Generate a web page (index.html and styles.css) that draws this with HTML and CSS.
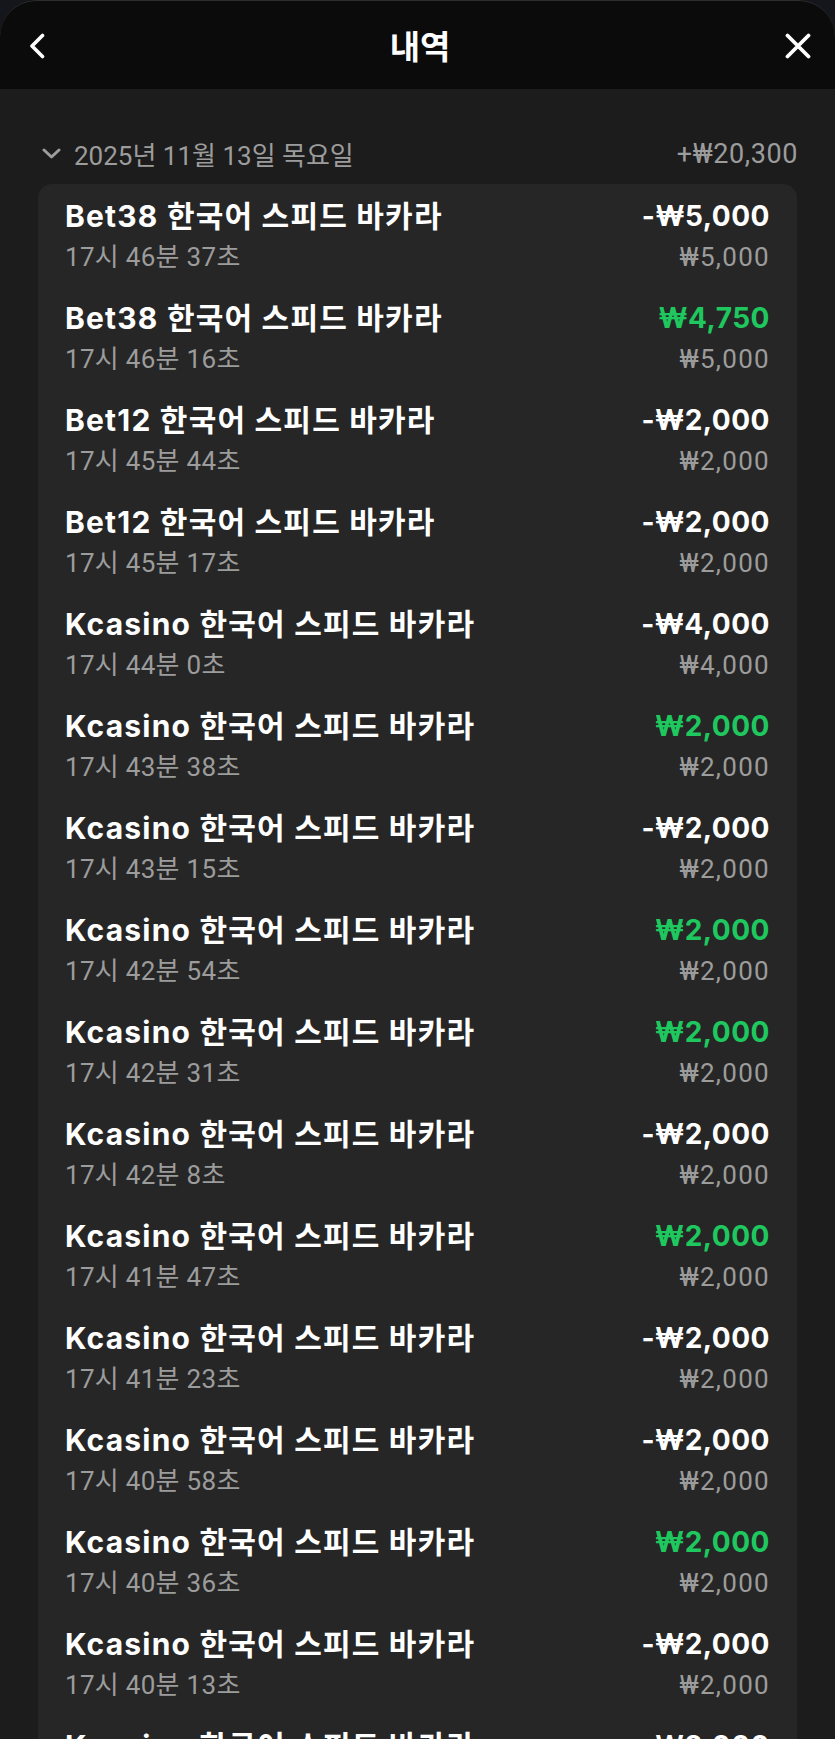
FILE: index.html
```html
<!DOCTYPE html>
<html lang="ko">
<head>
<meta charset="utf-8">
<title>내역</title>
<link rel="stylesheet" href="styles.css">
</head>
<body>
<div class="screen">
  <header class="topbar">
    <button class="icon-btn back" aria-label="뒤로">
      <svg width="16" height="26" viewBox="0 0 16 26"><polyline points="13.5,2.5 3,13 13.5,23.5" fill="none" stroke="#fff" stroke-width="3.6" stroke-linecap="round" stroke-linejoin="round"/></svg>
    </button>
    <h1 class="title">내역</h1>
    <button class="icon-btn close" aria-label="닫기">
      <svg width="26" height="26" viewBox="0 0 26 26"><path d="M2.5 2.5 L23.5 23.5 M23.5 2.5 L2.5 23.5" fill="none" stroke="#fff" stroke-width="3.8" stroke-linecap="round"/></svg>
    </button>
  </header>

  <main class="content">
    <div class="day-head">
      <div class="day-label">
        <svg class="day-chev" width="19" height="11" viewBox="0 0 19 11"><polyline points="2,2 9.5,9 17,2" fill="none" stroke="#9c9c9c" stroke-width="3" stroke-linecap="round" stroke-linejoin="round"/></svg>
        <span>2025년 11월 13일 목요일</span>
      </div>
      <div class="day-total">+₩20,300</div>
    </div>

    <section class="card">
      <div class="row"><div class="left"><div class="name">Bet38 한국어 스피드 바카라</div><div class="time">17시 46분 37초</div></div><div class="right"><div class="amt">-₩5,000</div><div class="bet">₩5,000</div></div></div>
      <div class="row"><div class="left"><div class="name">Bet38 한국어 스피드 바카라</div><div class="time">17시 46분 16초</div></div><div class="right"><div class="amt win">₩4,750</div><div class="bet">₩5,000</div></div></div>
      <div class="row"><div class="left"><div class="name">Bet12 한국어 스피드 바카라</div><div class="time">17시 45분 44초</div></div><div class="right"><div class="amt">-₩2,000</div><div class="bet">₩2,000</div></div></div>
      <div class="row"><div class="left"><div class="name">Bet12 한국어 스피드 바카라</div><div class="time">17시 45분 17초</div></div><div class="right"><div class="amt">-₩2,000</div><div class="bet">₩2,000</div></div></div>
      <div class="row"><div class="left"><div class="name">Kcasino 한국어 스피드 바카라</div><div class="time">17시 44분 0초</div></div><div class="right"><div class="amt">-₩4,000</div><div class="bet">₩4,000</div></div></div>
      <div class="row"><div class="left"><div class="name">Kcasino 한국어 스피드 바카라</div><div class="time">17시 43분 38초</div></div><div class="right"><div class="amt win">₩2,000</div><div class="bet">₩2,000</div></div></div>
      <div class="row"><div class="left"><div class="name">Kcasino 한국어 스피드 바카라</div><div class="time">17시 43분 15초</div></div><div class="right"><div class="amt">-₩2,000</div><div class="bet">₩2,000</div></div></div>
      <div class="row"><div class="left"><div class="name">Kcasino 한국어 스피드 바카라</div><div class="time">17시 42분 54초</div></div><div class="right"><div class="amt win">₩2,000</div><div class="bet">₩2,000</div></div></div>
      <div class="row"><div class="left"><div class="name">Kcasino 한국어 스피드 바카라</div><div class="time">17시 42분 31초</div></div><div class="right"><div class="amt win">₩2,000</div><div class="bet">₩2,000</div></div></div>
      <div class="row"><div class="left"><div class="name">Kcasino 한국어 스피드 바카라</div><div class="time">17시 42분 8초</div></div><div class="right"><div class="amt">-₩2,000</div><div class="bet">₩2,000</div></div></div>
      <div class="row"><div class="left"><div class="name">Kcasino 한국어 스피드 바카라</div><div class="time">17시 41분 47초</div></div><div class="right"><div class="amt win">₩2,000</div><div class="bet">₩2,000</div></div></div>
      <div class="row"><div class="left"><div class="name">Kcasino 한국어 스피드 바카라</div><div class="time">17시 41분 23초</div></div><div class="right"><div class="amt">-₩2,000</div><div class="bet">₩2,000</div></div></div>
      <div class="row"><div class="left"><div class="name">Kcasino 한국어 스피드 바카라</div><div class="time">17시 40분 58초</div></div><div class="right"><div class="amt">-₩2,000</div><div class="bet">₩2,000</div></div></div>
      <div class="row"><div class="left"><div class="name">Kcasino 한국어 스피드 바카라</div><div class="time">17시 40분 36초</div></div><div class="right"><div class="amt win">₩2,000</div><div class="bet">₩2,000</div></div></div>
      <div class="row"><div class="left"><div class="name">Kcasino 한국어 스피드 바카라</div><div class="time">17시 40분 13초</div></div><div class="right"><div class="amt">-₩2,000</div><div class="bet">₩2,000</div></div></div>
      <div class="row"><div class="left"><div class="name">Kcasino 한국어 스피드 바카라</div><div class="time">17시 39분 51초</div></div><div class="right"><div class="amt">-₩2,000</div><div class="bet">₩2,000</div></div></div>
    </section>
  </main>
</div>
</body>
</html>
```

FILE: styles.css
```css
* { box-sizing: border-box; }

html, body {
  margin: 0;
  padding: 0;
  background: #15161b;
}

body {
  font-family: "Noto Sans CJK KR", "Noto Sans", sans-serif;
  color: #fff;
  overflow: hidden;
  height: 1739px;
}

.screen {
  min-height: 1739px;
  background: #1c1c1c;
  border-radius: 36px 36px 0 0;
  overflow: hidden;
}

.topbar {
  height: 89px;
  background: #0b0b0b;
  border-radius: 36px 36px 0 0;
  box-shadow: inset 0 1px 0 rgba(255, 255, 255, 0.14);
  display: grid;
  grid-template-columns: 1fr auto 1fr;
  align-items: center;
  padding: 0 24px 0 29px;
}

.icon-btn {
  background: none;
  border: 0;
  padding: 0;
  margin: 0;
  display: flex;
  align-items: center;
  cursor: pointer;
}

.icon-btn.back { justify-self: start; margin-top: 2px; }
.icon-btn.close { justify-self: end; margin-top: 2px; }

.title {
  margin: 0;
  font-family: "Noto Sans CJK KR", sans-serif;
  font-size: 33px;
  font-weight: 700;
  letter-spacing: 0;
  line-height: 40px;
  color: #fff;
}

.content {
  padding: 0 38px;
}

.day-head {
  display: flex;
  justify-content: space-between;
  align-items: center;
  height: 95px;
  padding: 34px 0 0 4px;
}

.day-label {
  display: flex;
  align-items: center;
  gap: 13px;
  font-family: Roboto, "Noto Sans CJK KR", sans-serif;
  font-size: 26px;
  color: #9c9c9c;
  letter-spacing: 0;
}

.day-chev { flex: none; }

.day-total {
  font-family: Roboto, "Noto Sans CJK KR", sans-serif;
  font-size: 27px;
  letter-spacing: 0.6px;
  color: #9c9c9c;
  margin-right: -1px;
}

.card {
  background: #262626;
  border-radius: 14px;
  padding: 0 27px;
}

.row {
  display: flex;
  justify-content: space-between;
  height: 102px;
  padding-top: 12px;
}

.left, .right {
  display: flex;
  flex-direction: column;
}

.right { align-items: flex-end; }

.name, .amt {
  font-family: Inter, "Noto Sans CJK KR", sans-serif;
  font-size: 28px;
  font-weight: 700;
  line-height: 40px;
  color: #fff;
  white-space: nowrap;
}

.name {
  font-size: 30px;
  letter-spacing: 1.2px;
}

.amt { letter-spacing: 0.5px; }

.amt.win { color: #1fc85f; }

.time, .bet {
  font-family: Roboto, "Noto Sans CJK KR", sans-serif;
  font-size: 26px;
  font-weight: 400;
  line-height: 36px;
  margin-top: 3px;
  color: #9c9c9c;
  white-space: nowrap;
}

.time { letter-spacing: 0.3px; }
.bet { letter-spacing: 1.3px; }
```
